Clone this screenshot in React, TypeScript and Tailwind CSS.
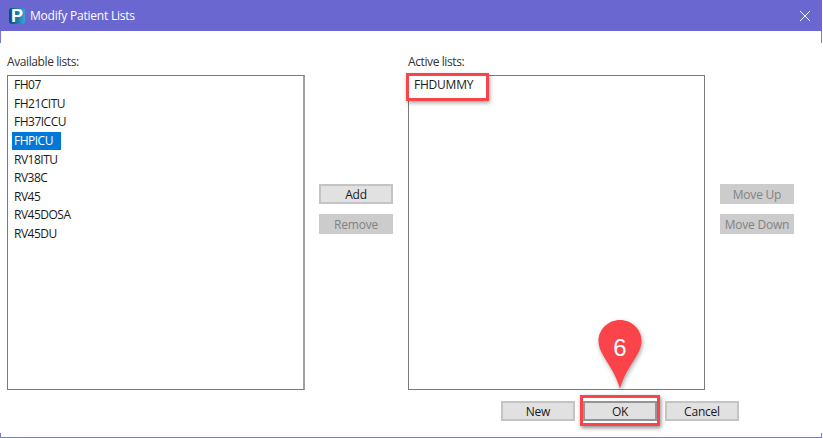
const available = ["FH07", "FH21CITU", "FH37ICCU", "FHPICU", "RV18ITU", "RV38C", "RV45", "RV45DOSA", "RV45DU"];

function Btn({ label, disabled, highlight }: { label: string; disabled?: boolean; highlight?: boolean }) {
  return (
    <div className="relative">
      <button
        className={
          "flex h-[20px] w-[74px] items-center justify-center border-2 pt-px text-[12px] leading-none " +
          (disabled
            ? "border-[#cccccc] bg-[#cccccc] text-[#838383]"
            : highlight
              ? "border-[#959595] bg-[#e1e1e1] text-[#1a1a1a]"
              : "border-[#c4c4c4] bg-[#e1e1e1] text-[#1a1a1a]")
        }
      >
        {label}
      </button>
      {highlight && (
        <div className="absolute -left-[3px] -top-[6px] h-[31px] w-[80px] border-[3px] border-[#f9444b] shadow-[1px_2px_4px_rgba(0,0,0,0.45)]" />
      )}
    </div>
  );
}

export default function App() {
  return (
    <div className="relative flex h-[438px] w-[822px] flex-col bg-white font-['Open_Sans','Noto_Sans',sans-serif] text-[12px] tracking-[-0.22px] text-[#1a1a1a]">
      <div className="flex h-[31px] shrink-0 items-center justify-between bg-[#6a67d1] pl-[9px] pr-[10px]">
        <div className="flex items-center gap-[5px]">
          <div className="flex h-[16px] w-[16px] items-center justify-center rounded-[3px] bg-gradient-to-r from-[#0b4a78] to-[#36a6d8] font-['Liberation_Sans',sans-serif] text-[18px] font-bold leading-none text-white">
            P
          </div>
          <span className="text-[12px] text-white">Modify Patient Lists</span>
        </div>
        <svg width="12" height="12" viewBox="0 0 12 12" className="mr-[1px]">
          <path d="M1 1 L11 11 M11 1 L1 11" stroke="#ffffff" strokeWidth="1" fill="none" />
        </svg>
      </div>

      <div className="flex grow border-b border-[#7b78d6] pl-[7px] pt-[23px]">
        <div className="flex w-[298px] flex-col">
          <span className="h-[21px] leading-[16px] tracking-[-0.4px] text-[#333333]">Available lists:</span>
          <div className="flex h-[315px] flex-col border border-r-2 border-[#7a7a7a] border-r-[#a0a0a0] pl-[4px] tracking-[-0.5px]">
            {available.map((name) => (
              <div key={name} className="flex h-[18.6px] items-center">
                <span
                  className={
                    "px-[2px] leading-[18px] " + (name === "FHPICU" ? "bg-[#0078d7] pr-[8px] text-white" : "")
                  }
                >
                  {name}
                </span>
              </div>
            ))}
          </div>
        </div>

        <div className="ml-[14px] flex flex-col gap-[10px] pt-[130px]">
          <Btn label="Add" />
          <Btn label="Remove" disabled />
        </div>

        <div className="ml-[15px] flex w-[297px] flex-col">
          <span className="h-[21px] leading-[16px] tracking-[-0.4px] text-[#333333]">Active lists:</span>
          <div className="relative h-[315px] border border-[#7a7a7a] pl-[5px]">
            <span className="leading-[18px]">FHDUMMY</span>
            <div className="absolute -left-[3px] -top-[3px] h-[28px] w-[83px] border-[3px] border-[#f9444b] shadow-[1px_2px_4px_rgba(0,0,0,0.35)]" />
          </div>
          <div className="ml-[93px] mt-[11px] flex gap-[8px]">
            <Btn label="New" />
            <Btn label="OK" highlight />
            <Btn label="Cancel" />
          </div>
        </div>

        <div className="ml-[15px] flex flex-col gap-[10px] pt-[130px]">
          <Btn label="Move Up" disabled />
          <Btn label="Move Down" disabled />
        </div>
      </div>

      {/* window edge stubs */}
      <div className="absolute left-0 top-[31px] h-[12px] w-px bg-[#7b78d6]" />
      <div className="absolute right-0 top-[31px] h-[12px] w-px bg-[#7b78d6]" />
      <div className="absolute bottom-0 left-0 h-[5px] w-px bg-[#7b78d6]" />
      <div className="absolute bottom-0 right-0 h-[5px] w-px bg-[#7b78d6]" />

      <svg
        width="46"
        height="72"
        viewBox="0 0 46 72"
        className="absolute left-[597px] top-[319px] drop-shadow-[1px_2px_2px_rgba(0,0,0,0.35)]"
      >
        <path
          d="M23 1 C34.5 1 44.5 10 44.5 22 C44.5 36 29 47 23 70 C17 47 1.5 36 1.5 22 C1.5 10 11.5 1 23 1 Z"
          fill="#fb4449"
        />
      </svg>
      <span className="absolute left-[597px] top-[333px] w-[46px] text-center font-['Liberation_Sans',sans-serif] text-[24px] leading-[30px] tracking-normal text-white">
        6
      </span>
    </div>
  );
}
